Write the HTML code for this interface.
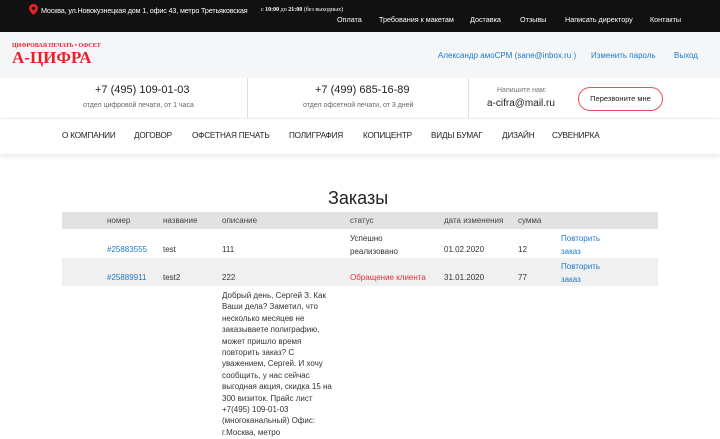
<!DOCTYPE html>
<html><head><meta charset="utf-8"><style>
*{margin:0;padding:0;box-sizing:border-box}
body{width:720px;height:439px;overflow:hidden;font-family:"Liberation Sans",sans-serif;background:#fff;position:relative;color:#222}
.a{position:absolute;white-space:nowrap}
.top{position:absolute;left:0;top:0;width:720px;height:32px;background:#111;color:#fff;font-size:7.2px}
.hdr{position:absolute;left:0;top:32px;width:720px;height:46px;background:#f5f6f8}
.nav{position:absolute;left:0;top:118px;width:720px;height:36px;background:#fff;box-shadow:0 3px 5px rgba(0,0,0,.08);border-top:1px solid #eee}
.nav span{position:absolute;top:12px;font-size:8.2px;color:#222;letter-spacing:-.2px}
.th{font-size:8px;color:#444}
.td{font-size:8px;color:#333}
.link{color:#1e7ac4}
</style></head><body>
<div class="top">
<svg class="a" style="left:29px;top:4px" width="9" height="11" viewBox="0 0 9 11"><path d="M4.5 0C2 0 0 2 0 4.3 0 7.3 4.5 11 4.5 11S9 7.3 9 4.3C9 2 7 0 4.5 0z" fill="#e8202a"/><circle cx="4.5" cy="4.3" r="1.6" fill="#111"/></svg>
<div class="a" style="left:41px;top:6px;letter-spacing:-.15px">Москва, ул.Новокузнецкая дом 1, офис 43, метро Третьяковская</div>
<div class="a" style="left:261px;top:7px;font-size:6px;font-family:'Liberation Serif',serif">с <b>10:00</b> до <b>21:00</b> (без выходных)</div>
<div class="a" style="left:337px;top:15px">Оплата</div>
<div class="a" style="left:379px;top:15px">Требования к макетам</div>
<div class="a" style="left:470px;top:15px">Доставка</div>
<div class="a" style="left:520px;top:15px">Отзывы</div>
<div class="a" style="left:565px;top:15px">Написать директору</div>
<div class="a" style="left:650px;top:15px">Контакты</div>
</div>
<div class="hdr">
<div class="a" style="left:12px;top:11px;font-size:6px;color:#e8202a;font-family:'Liberation Serif',serif;font-weight:bold">ЦИФРОВАЯ ПЕЧАТЬ • ОФСЕТ</div>
<div class="a" style="left:12px;top:16px;font-size:17px;color:#e8202a;font-family:'Liberation Serif',serif;font-weight:bold">А-ЦИФРА</div>
<div class="a link" style="left:438px;top:19px;font-size:8px">Александр амоCPM (sane@inbox.ru )</div>
<div class="a link" style="left:591px;top:19px;font-size:8px">Изменить пароль</div>
<div class="a link" style="left:674px;top:19px;font-size:8px">Выход</div>
</div>
<div class="a" style="left:247px;top:78px;width:1px;height:40px;background:#ddd"></div>
<div class="a" style="left:468px;top:78px;width:1px;height:40px;background:#ddd"></div>
<div class="a" style="left:95px;top:84px;font-size:11px">+7 (495) 109-01-03</div>
<div class="a" style="left:83px;top:102px;font-size:7px;color:#666">отдел цифровой печати, от 1 часа</div>
<div class="a" style="left:315px;top:84px;font-size:11px">+7 (499) 685-16-89</div>
<div class="a" style="left:303px;top:102px;font-size:7px;color:#666">отдел офсетной печати, от 3 дней</div>
<div class="a" style="left:497px;top:87px;font-size:7px;color:#777">Напишите нам:</div>
<div class="a" style="left:487px;top:98px;font-size:10px">a-cifra@mail.ru</div>
<div class="a" style="left:578px;top:87px;width:85px;height:24px;border:1px solid #e8505a;border-radius:12px;font-size:7.5px;text-align:center;line-height:22px">Перезвоните мне</div>
<div class="nav">
<span style="left:62px">О КОМПАНИИ</span><span style="left:134px">ДОГОВОР</span><span style="left:192px">ОФСЕТНАЯ ПЕЧАТЬ</span><span style="left:289px">ПОЛИГРАФИЯ</span><span style="left:363px">КОПИЦЕНТР</span><span style="left:431px">ВИДЫ БУМАГ</span><span style="left:502px">ДИЗАЙН</span><span style="left:552px">СУВЕНИРКА</span>
</div>
<div class="a" style="left:328px;top:188px;font-size:18px">Заказы</div>
<div class="a" style="left:62px;top:212px;width:596px;height:17px;background:#e2e2e2"></div>
<div class="a" style="left:62px;top:258px;width:596px;height:28px;background:#f0f0f0"></div>
<div class="a th" style="left:107px;top:216px">номер</div>
<div class="a th" style="left:163px;top:216px">название</div>
<div class="a th" style="left:222px;top:216px">описание</div>
<div class="a th" style="left:350px;top:216px">статус</div>
<div class="a th" style="left:444px;top:216px">дата изменения</div>
<div class="a th" style="left:518px;top:216px">сумма</div>
<div class="a td link" style="left:107px;top:245px">#25883555</div>
<div class="a td" style="left:163px;top:245px">test</div>
<div class="a td" style="left:222px;top:245px">111</div>
<div class="a td" style="left:350px;top:232px;line-height:13px">Успешно<br>реализовано</div>
<div class="a td" style="left:444px;top:245px">01.02.2020</div>
<div class="a td" style="left:518px;top:245px">12</div>
<div class="a td link" style="left:561px;top:232px;line-height:13px">Повторить<br>заказ</div>
<div class="a td link" style="left:107px;top:273px">#25889911</div>
<div class="a td" style="left:163px;top:273px">test2</div>
<div class="a td" style="left:222px;top:273px">222</div>
<div class="a td" style="left:350px;top:273px;color:#e8303a">Обращение клиента</div>
<div class="a td" style="left:444px;top:273px">31.01.2020</div>
<div class="a td" style="left:518px;top:273px">77</div>
<div class="a td link" style="left:561px;top:260px;line-height:13px">Повторить<br>заказ</div>
<div class="a td" style="left:222px;top:290px;line-height:11.4px">Добрый день, Сергей З. Как<br>Ваши дела? Заметил, что<br>несколько месяцев не<br>заказываете полиграфию,<br>может пришло время<br>повторить заказ? С<br>уважением, Сергей. И хочу<br>сообщить, у нас сейчас<br>выгодная акция, скидка 15 на<br>300 визиток. Прайс лист<br>+7(495) 109-01-03<br>(многоканальный) Офис:<br>г.Москва, метро</div>
</body></html>
